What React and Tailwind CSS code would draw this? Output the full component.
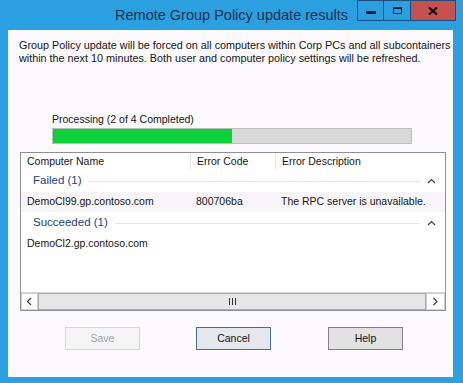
import React from "react";

// Remote Group Policy update results dialog (Windows 8 style)

const cols = ["w-[169px]", "w-[85px]", "flex-1"];

function Chevron({ dir = "up" }) {
  const d = {
    up: "M1 5 L4.5 1.5 L8 5",
    left: "M5 1 L1.5 4.5 L5 8",
    right: "M1.5 1 L5 4.5 L1.5 8",
  }[dir];
  const box = dir === "up" ? "0 0 9 6" : "0 0 7 9";
  return (
    <svg viewBox={box} className={dir === "up" ? "w-[9px] h-[6px]" : "w-[7px] h-[9px]"}>
      <path d={d} fill="none" stroke="#3a3a3a" strokeWidth="1.2" />
    </svg>
  );
}

function GroupRow({ label }) {
  return (
    <div className="h-[22px] flex items-center pl-[12px] pr-[9px]">
      <span className="text-[11.5px] text-[#1e3b8b]">{label}</span>
      <div className="flex-1 h-px bg-[#e4e4e4] ml-[7px]" />
      <div className="ml-[7px]">
        <Chevron dir="up" />
      </div>
    </div>
  );
}

function DataRow({ cells, shaded }) {
  return (
    <div className={`h-[20px] flex items-center ${shaded ? "bg-[#f8f5f8]" : ""}`}>
      {cells.map((c, i) => (
        <div key={i} className={`${cols[i]} pl-[6px] whitespace-nowrap`}>{c}</div>
      ))}
    </div>
  );
}

function Button({ children, kind }) {
  const styles = {
    disabled: "bg-[#f6f5f6] border-[#d6d6d6] text-[#a3a3a3]",
    focus: "bg-[#e4e8ec] border-[#3d6f98] text-[#111]",
    normal: "bg-[#e2e2e2] border-[#808080] text-[#111]",
  }[kind];
  return (
    <div className={`w-[75px] h-[23px] border flex items-center justify-center ${styles}`}>
      {children}
    </div>
  );
}

export default function App() {
  return (
    <div className="w-[463px] h-[383px] bg-[#2ba0e1] flex flex-col overflow-hidden font-['Liberation_Sans',Arial,sans-serif] text-[10.5px] text-[#151515]">
      {/* title bar */}
      <div className="relative h-[30px] shrink-0">
        <div className="text-center text-[14.5px] leading-[30px] text-[#16304e]">
          Remote Group Policy update results
        </div>
        <div className="absolute top-0 right-[7px] flex h-[21px]">
          <div className="w-[27px] border border-[#1d4f7c] flex items-center justify-center">
            <div className="w-[10px] h-[3px] bg-[#0d2236] mt-[4px]" />
          </div>
          <div className="w-[27px] border-y border-r border-[#1d4f7c] flex items-center justify-center">
            <div className="w-[9px] h-[7px] border border-t-2 border-[#0d2236]" />
          </div>
          <div className="w-[45px] border-y border-r border-[#1d4f7c] bg-[#c75050] flex items-center justify-center">
            <svg viewBox="0 0 10 8" className="w-[10px] h-[8px]">
              <path d="M1 0.5 L9 7.5 M9 0.5 L1 7.5" stroke="#111" strokeWidth="2.2" />
            </svg>
          </div>
        </div>
      </div>

      {/* client area */}
      <div className="ml-[8px] mr-[10px] h-[347px] bg-[#fbf9fb] flex flex-col">
        <p className="pl-[11px] pt-[9px] text-[10.8px] leading-[13px] whitespace-nowrap">
          Group Policy update will be forced on all computers within Corp PCs and all subcontainers
          <br />
          within the next 10 minutes. Both user and computer policy settings will be refreshed.
        </p>

        <div className="ml-[44px] mt-[47px] leading-[14px]">Processing (2 of 4 Completed)</div>
        <div className="ml-[44px] mt-[2px] w-[360px] h-[16px] border border-[#bcbcbc] bg-[#d8d8d8] flex">
          <div className="w-[179px] bg-[#0cd13a]" />
        </div>

        {/* results list */}
        <div className="ml-[12px] mt-[8px] w-[426px] h-[159px] border border-[#8f9091] bg-white flex flex-col">
          <div className="h-[17px] flex items-center">
            <div className={`${cols[0]} pl-[6px]`}>Computer Name</div>
            <div className={`${cols[1]} pl-[6px] border-l border-[#e6e6e6] h-full flex items-center`}>Error Code</div>
            <div className={`${cols[2]} pl-[6px] border-l border-[#e6e6e6] h-full flex items-center`}>Error Description</div>
          </div>
          <GroupRow label="Failed (1)" />
          <DataRow shaded cells={["DemoCl99.gp.contoso.com", "800706ba", "The RPC server is unavailable."]} />
          <GroupRow label="Succeeded (1)" />
          <DataRow cells={["DemoCl2.gp.contoso.com", "", ""]} />
          <div className="flex-1" />
          <div className="h-[18px] flex border-t border-[#d4d4d4]">
            <div className="w-[17px] border border-[#cfcfcf] flex items-center justify-center">
              <Chevron dir="left" />
            </div>
            <div className="flex-1 bg-[#e6e6e6] border border-[#ababab] flex items-center justify-center gap-[2px]">
              <div className="w-px h-[7px] bg-[#333]" />
              <div className="w-px h-[7px] bg-[#333]" />
              <div className="w-px h-[7px] bg-[#333]" />
            </div>
            <div className="w-[19px] border border-[#cfcfcf] flex items-center justify-center">
              <Chevron dir="right" />
            </div>
          </div>
        </div>

        {/* buttons */}
        <div className="flex ml-[57px] mt-[16px]">
          <Button kind="disabled">Save</Button>
          <div className="ml-[56px]">
            <Button kind="focus">Cancel</Button>
          </div>
          <div className="ml-[57px]">
            <Button kind="normal">Help</Button>
          </div>
        </div>
      </div>
    </div>
  );
}
